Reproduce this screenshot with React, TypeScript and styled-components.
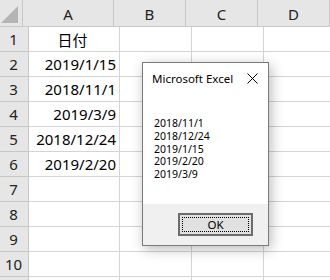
import React from 'react'
import styled, { createGlobalStyle } from 'styled-components'

const GlobalStyle = createGlobalStyle`
  html, body {
    margin: 0;
    padding: 0;
    background: #ffffff;
    overflow: hidden;
  }
  body {
    font-family: "Noto Sans", "Noto Sans CJK JP", sans-serif;
  }
`

const columns = [
  { key: 'A', width: 91 },
  { key: 'B', width: 72 },
  { key: 'C', width: 72 },
  { key: 'D', width: 72 },
]

const cells: Record<number, string> = {
  2: '2019/1/15',
  3: '2018/11/1',
  4: '2019/3/9',
  5: '2018/12/24',
  6: '2019/2/20',
}

const sorted = ['2018/11/1', '2018/12/24', '2019/1/15', '2019/2/20', '2019/3/9']

const App: React.FC = () => {
  const rows = Array.from({ length: 11 }, (_, i) => i + 1)
  return (
    <Page>
      <GlobalStyle />
      <Sheet>
        <HeaderRow>
          <Corner>
            <CornerMark />
          </Corner>
          {columns.map((c) => (
            <ColHeader key={c.key} $width={c.width}>
              {c.key}
            </ColHeader>
          ))}
        </HeaderRow>
        {rows.map((r) => (
          <Row key={r}>
            {/* row 11 peeks in below the window edge, its label is out of view */}
            <RowHeader>{r <= 10 ? r : ''}</RowHeader>
            {columns.map((c) => (
              <Cell key={c.key} $width={c.width} $center={r === 1}>
                {c.key === 'A' ? (r === 1 ? '日付' : cells[r]) : null}
              </Cell>
            ))}
          </Row>
        ))}
      </Sheet>

      <Dialog>
        <DialogBody>
          <TitleBar>
            <Title>Microsoft Excel</Title>
            <CloseIcon width="11" height="11" viewBox="0 0 11 11">
              <path d="M0.5 0.5 L10.5 10.5 M10.5 0.5 L0.5 10.5" stroke="#000" strokeWidth="1" />
            </CloseIcon>
          </TitleBar>
          <Message>
            {sorted.map((d) => (
              <div key={d}>{d}</div>
            ))}
          </Message>
        </DialogBody>
        <DialogFooter>
          <OkButton>
            <FocusRing>OK</FocusRing>
          </OkButton>
        </DialogFooter>
      </Dialog>
    </Page>
  )
}

const Page = styled.div`
  position: relative;
  width: 330px;
  height: 280px;
  overflow: hidden;
`

const Sheet = styled.div`
  display: flex;
  flex-direction: column;
`

const HeaderRow = styled.div`
  display: flex;
  height: 27px;
  background: #e6e6e6;
`

const Corner = styled.div`
  width: 29px;
  box-sizing: border-box;
  border-right: 1px solid #c8c8c8;
  border-bottom: 1px solid #c8c8c8;
  display: flex;
  align-items: flex-end;
  justify-content: flex-end;
  padding: 0 4px 3px 0;
`

const CornerMark = styled.div`
  width: 17px;
  height: 17px;
  background: #b4b4b4;
  clip-path: polygon(100% 0, 100% 100%, 0 100%);
`

const ColHeader = styled.div<{ $width: number }>`
  flex: 0 0 ${(p) => p.$width}px;
  box-sizing: border-box;
  border-right: 1px solid #c8c8c8;
  border-bottom: 1px solid #c8c8c8;
  display: flex;
  align-items: center;
  justify-content: center;
  font-size: 15px;
  color: #222;
  padding-top: 1px;
`

const Row = styled.div`
  display: flex;
  height: 25px;
`

const RowHeader = styled.div`
  width: 29px;
  flex: 0 0 29px;
  box-sizing: border-box;
  background: #e6e6e6;
  border-right: 1px solid #c8c8c8;
  border-bottom: 1px solid #c8c8c8;
  display: flex;
  align-items: center;
  justify-content: center;
  font-size: 15px;
  color: #222;
  padding-right: 1px;
`

const Cell = styled.div<{ $width: number; $center?: boolean }>`
  flex: 0 0 ${(p) => p.$width}px;
  box-sizing: border-box;
  border-right: 1px solid #d4d4d4;
  border-bottom: 1px solid #d4d4d4;
  display: flex;
  align-items: center;
  justify-content: ${(p) => (p.$center ? 'center' : 'flex-end')};
  padding-right: 3px;
  font-size: 15px;
  color: #000;
  white-space: nowrap;
`

const Dialog = styled.div`
  position: absolute;
  left: 142px;
  top: 62px;
  width: 127px;
  height: 184px;
  box-sizing: border-box;
  border: 1px solid #7a7a7a;
  background: #f0f0f0;
  display: flex;
  flex-direction: column;
  box-shadow: 2px 3px 12px rgba(0, 0, 0, 0.28);
  font-family: "Noto Sans", sans-serif;
`

const DialogBody = styled.div`
  background: #ffffff;
  height: 141px;
  display: flex;
  flex-direction: column;
`

const TitleBar = styled.div`
  display: flex;
  align-items: center;
  justify-content: space-between;
  height: 30px;
  padding: 0 10px 0 9px;
`

const Title = styled.span`
  font-size: 11.5px;
  color: #000;
`

const CloseIcon = styled.svg`
  display: block;
`

const Message = styled.div`
  padding: 24px 0 0 11px;
  font-size: 10.5px;
  line-height: 12.8px;
  color: #000;
`

const DialogFooter = styled.div`
  flex: 1;
  display: flex;
  justify-content: flex-end;
  align-items: flex-start;
  padding: 9px 15px 0 0;
`

const OkButton = styled.div`
  width: 75px;
  height: 23px;
  box-sizing: border-box;
  border: 2px solid #6d6d6d;
  background: #e1e1e1;
  padding: 2px;
  display: flex;
`

const FocusRing = styled.div`
  flex: 1;
  border: 1px dotted #000;
  display: flex;
  align-items: center;
  justify-content: center;
  font-size: 11.5px;
  color: #000;
`

export default App
